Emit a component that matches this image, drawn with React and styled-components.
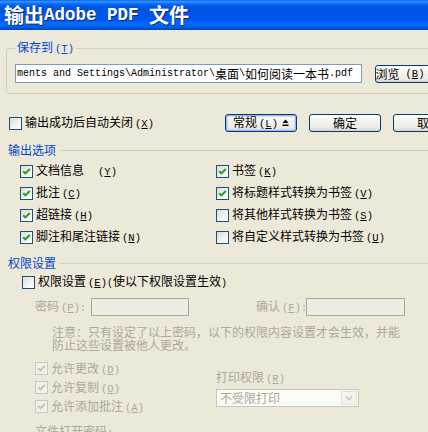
import React from "react";
import styled, { createGlobalStyle } from "styled-components";

const GlobalStyle = createGlobalStyle`
  html, body { margin: 0; padding: 0; background: #ECE9D8; overflow: hidden; }
  body { font-family: "Noto Sans CJK SC", "Noto Sans", sans-serif; font-size: 12px; }
  * { box-sizing: border-box; }
`;

const Dialog = styled.div`
  width: 428px;
  height: 432px;
  overflow: hidden;
  background: #ECE9D8;
  color: #000;
  display: flex;
  flex-direction: column;
  font-size: 12px;
  line-height: 14px;
`;

const TitleBar = styled.div`
  flex: none;
  height: 30px;
  display: flex;
  align-items: center;
  padding-left: 4px;
  white-space: nowrap;
  color: #fff;
  font-weight: bold;
  font-size: 20px;
  line-height: 30px;
  text-shadow: 1px 1px 0 #0a2a7a;
  background: linear-gradient(
    to bottom,
    #0058ee 0%,
    #3593ff 5%,
    #127dff 10%,
    #0262ee 16%,
    #0057e5 22%,
    #0054e3 30%,
    #0055eb 56%,
    #005bf5 68%,
    #026afe 78%,
    #0062ef 88%,
    #0052d6 94%,
    #0046c0 100%
  );
`;

const TitleLatin = styled.span`
  font-family: "Liberation Mono", monospace;
  font-size: 17.5px;
  font-weight: bold;
  white-space: pre;
`;

const Mono = styled.span`
  font-family: "Liberation Mono", monospace;
  font-size: 10px;
  white-space: pre;
`;

const KeyWrap = styled.span`
  font-family: "Liberation Mono", monospace;
  font-size: 10.5px;
  margin-left: 2px;
  white-space: pre;
`;

const Key = ({ k }) => (
  <KeyWrap>
    (<u>{k}</u>)
  </KeyWrap>
);

const Group = styled.fieldset`
  flex: none;
  width: 460px;
  min-width: 0;
  margin: 10px 0 0 6px;
  padding: 8px 0 10px 8px;
  border: 1px solid #d0d0bf;
  border-radius: 4px;
`;

const GroupLegend = styled.legend`
  padding: 0 2px;
  color: #0046d5;
  line-height: 14px;
  font-size: 12px;
`;

const PathRow = styled.div`
  display: flex;
  align-items: center;
  gap: 13px;
`;

const PathInput = styled.div`
  flex: none;
  width: 347px;
  height: 19px;
  border: 1px solid #7f9db9;
  background: #fff;
  padding: 0 1px;
  display: flex;
  align-items: center;
  white-space: nowrap;
  overflow: hidden;
  line-height: 17px;
`;

const Button = styled.div`
  flex: none;
  width: 72px;
  height: 18px;
  display: flex;
  align-items: center;
  justify-content: center;
  gap: 4px;
  border: 1px solid #003c74;
  border-radius: 3px;
  background: linear-gradient(to bottom, #ffffff 0%, #f4f3ee 40%, #ecebe6 80%, #d6d0c5 100%);
  white-space: nowrap;
  box-shadow: ${(p) =>
    p.$focused ? "inset 0 0 0 1px #9ab8ee, inset 0 0 0 2px #cfdcf6" : "none"};
`;

const ActionRow = styled.div`
  flex: none;
  margin-top: 20px;
  height: 18px;
  display: flex;
  align-items: center;
  padding-left: 9px;
`;

const AutoClose = styled.div`
  flex: none;
  width: 216px;
`;

const ButtonGroup = styled.div`
  flex: none;
  display: flex;
  gap: 12px;
`;

const SectionHeader = styled.div`
  flex: none;
  margin-top: ${(p) => p.$mt}px;
  height: 14px;
  display: flex;
  align-items: center;
  padding-left: 8px;
  color: #0046d5;
  white-space: nowrap;
`;

const HeaderLine = styled.span`
  flex: 1;
  height: 1px;
  margin-left: 4px;
  background: #d0d0bf;
`;

const OptionGrid = styled.div`
  flex: none;
  margin-top: 3px;
  padding-left: 20px;
  display: grid;
  grid-template-columns: 196px 1fr;
  grid-auto-rows: 22px;
`;

const CheckItem = styled.div`
  display: flex;
  align-items: center;
  gap: 3px;
  white-space: nowrap;
  height: ${(p) => p.$h || 22}px;
  color: ${(p) => (p.$disabled ? "#aca899" : "#000")};
`;

const Box = styled.span`
  flex: none;
  width: 13px;
  height: 13px;
  border: 1px solid ${(p) => (p.$disabled ? "#cac8bb" : "#1c5180")};
  background: ${(p) =>
    p.$disabled ? "#f3f1e8" : "linear-gradient(135deg, #dcdcd7 0%, #f4f4f0 60%, #ffffff 100%)"};
  display: flex;
  align-items: center;
  justify-content: center;
`;

const CheckBox = ({ checked, disabled }) => (
  <Box $disabled={disabled}>
    {checked && (
      <svg width="11" height="11" viewBox="0 0 11 11">
        <path
          d="M2.2 5.2 L4.4 7.4 L8.8 3"
          fill="none"
          stroke={disabled ? "#c6c3b5" : "#21a121"}
          strokeWidth="2"
        />
      </svg>
    )}
  </Box>
);

const Check = ({ checked, disabled, h, children }) => (
  <CheckItem $disabled={disabled} $h={h}>
    <CheckBox checked={checked} disabled={disabled} />
    <span>{children}</span>
  </CheckItem>
);

const PermRow = styled.div`
  flex: none;
  margin-top: 3px;
  padding-left: 22px;
  height: 18px;
  display: flex;
  align-items: center;
`;

const PasswordRow = styled.div`
  flex: none;
  margin-top: 7px;
  padding-left: 35px;
  height: 18px;
  display: flex;
  align-items: center;
`;

const Field = styled.div`
  flex: none;
  display: flex;
  align-items: center;
  margin-left: ${(p) => p.$ml || 0}px;
`;

const FieldLabel = styled.span`
  flex: none;
  width: ${(p) => p.$w}px;
  color: #aca899;
  white-space: nowrap;
`;

const DisabledInput = styled.div`
  flex: none;
  width: ${(p) => p.$w}px;
  height: 18px;
  border: 1px solid #aaa89e;
  background: #eeece3;
`;

const Note = styled.div`
  flex: none;
  margin-top: 9px;
  padding-left: 52px;
  line-height: 13px;
  color: #aca899;
  white-space: nowrap;
`;

const Lower = styled.div`
  flex: none;
  margin-top: 8px;
  padding-left: 35px;
  display: flex;
`;

const LowerLeft = styled.div`
  flex: none;
  width: 181px;
  display: flex;
  flex-direction: column;
`;

const LowerRight = styled.div`
  flex: none;
  padding-top: 11px;
  display: flex;
  flex-direction: column;
  gap: 3px;
  color: #aca899;
`;

const Select = styled.div`
  width: 143px;
  height: 18px;
  border: 1px solid #c9c7ba;
  background: #fbfbf8;
  display: flex;
  align-items: center;
  padding-left: 3px;
  color: #aca899;
`;

const SelectText = styled.span`
  flex: 1;
`;

const SelectArrow = styled.span`
  flex: none;
  width: 16px;
  height: 14px;
  margin-right: 1px;
  border: 1px solid #e3e2da;
  background: #f3f2ec;
  display: flex;
  align-items: center;
  justify-content: center;
`;

const FileOpen = styled.div`
  flex: none;
  margin-top: 8px;
  padding-left: 35px;
  color: #aca899;
`;

const CollapseIcon = () => (
  <svg width="7" height="8" viewBox="0 0 7 8">
    <path d="M3.5 0.5 L6.5 4 L0.5 4 Z" fill="#000" />
    <rect x="0.5" y="5.5" width="6" height="1.5" fill="#000" />
  </svg>
);

export default function App() {
  return (
    <>
      <GlobalStyle />
      <Dialog>
        <TitleBar>
          输出<TitleLatin>Adobe PDF </TitleLatin>文件
        </TitleBar>

        <Group>
          <GroupLegend>
            保存到<Key k="T" />
          </GroupLegend>
          <PathRow>
            <PathInput>
              <Mono>ments and Settings\Administrator\</Mono>桌面<Mono>\</Mono>如何阅读一本书<Mono>.pdf</Mono>
            </PathInput>
            <Button>
              浏览<Key k="B" />
              <Mono>...</Mono>
            </Button>
          </PathRow>
        </Group>

        <ActionRow>
          <AutoClose>
            <Check h={18}>
              输出成功后自动关闭<Key k="X" />
            </Check>
          </AutoClose>
          <ButtonGroup>
            <Button $focused>
              <span>
                常规<Key k="L" />
              </span>
              <CollapseIcon />
            </Button>
            <Button>确定</Button>
            <Button>取消</Button>
          </ButtonGroup>
        </ActionRow>

        <SectionHeader $mt={11}>
          输出选项
          <HeaderLine />
        </SectionHeader>

        <OptionGrid>
          <Check checked>
            文档信息<Mono>  </Mono>
            <Key k="Y" />
          </Check>
          <Check checked>
            书签<Key k="K" />
          </Check>
          <Check checked>
            批注<Key k="C" />
          </Check>
          <Check checked>
            将标题样式转换为书签<Key k="V" />
          </Check>
          <Check checked>
            超链接<Key k="H" />
          </Check>
          <Check>
            将其他样式转换为书签<Key k="S" />
          </Check>
          <Check checked>
            脚注和尾注链接<Key k="N" />
          </Check>
          <Check>
            将自定义样式转换为书签<Key k="U" />
          </Check>
        </OptionGrid>

        <SectionHeader $mt={8}>
          权限设置
          <HeaderLine />
        </SectionHeader>

        <PermRow>
          <Check h={18}>
            权限设置<Key k="E" />
            <Mono>(</Mono>使以下权限设置生效<Mono>)</Mono>
          </Check>
        </PermRow>

        <PasswordRow>
          <Field>
            <FieldLabel $w={56}>
              密码<Key k="P" />
              <Mono>:</Mono>
            </FieldLabel>
            <DisabledInput $w={98} />
          </Field>
          <Field $ml={67}>
            <FieldLabel $w={50}>
              确认<Key k="F" />
              <Mono>:</Mono>
            </FieldLabel>
            <DisabledInput $w={99} />
          </Field>
        </PasswordRow>

        <Note>
          注意：只有设定了以上密码，以下的权限内容设置才会生效，并能
          <br />
          防止这些设置被他人更改。
        </Note>

        <Lower>
          <LowerLeft>
            <Check checked disabled h={19}>
              允许更改<Key k="D" />
            </Check>
            <Check checked disabled h={19}>
              允许复制<Key k="O" />
            </Check>
            <Check checked disabled h={19}>
              允许添加批注<Key k="A" />
            </Check>
          </LowerLeft>
          <LowerRight>
            <span>
              打印权限<Key k="R" />
            </span>
            <Select>
              <SelectText>不受限打印</SelectText>
              <SelectArrow>
                <svg width="8" height="6" viewBox="0 0 8 6">
                  <path d="M1 1.5 L4 4.5 L7 1.5" fill="none" stroke="#c4c3bb" strokeWidth="1.5" />
                </svg>
              </SelectArrow>
            </Select>
          </LowerRight>
        </Lower>

        <FileOpen>
          文件打开密码<Mono>:</Mono>
        </FileOpen>
      </Dialog>
    </>
  );
}
